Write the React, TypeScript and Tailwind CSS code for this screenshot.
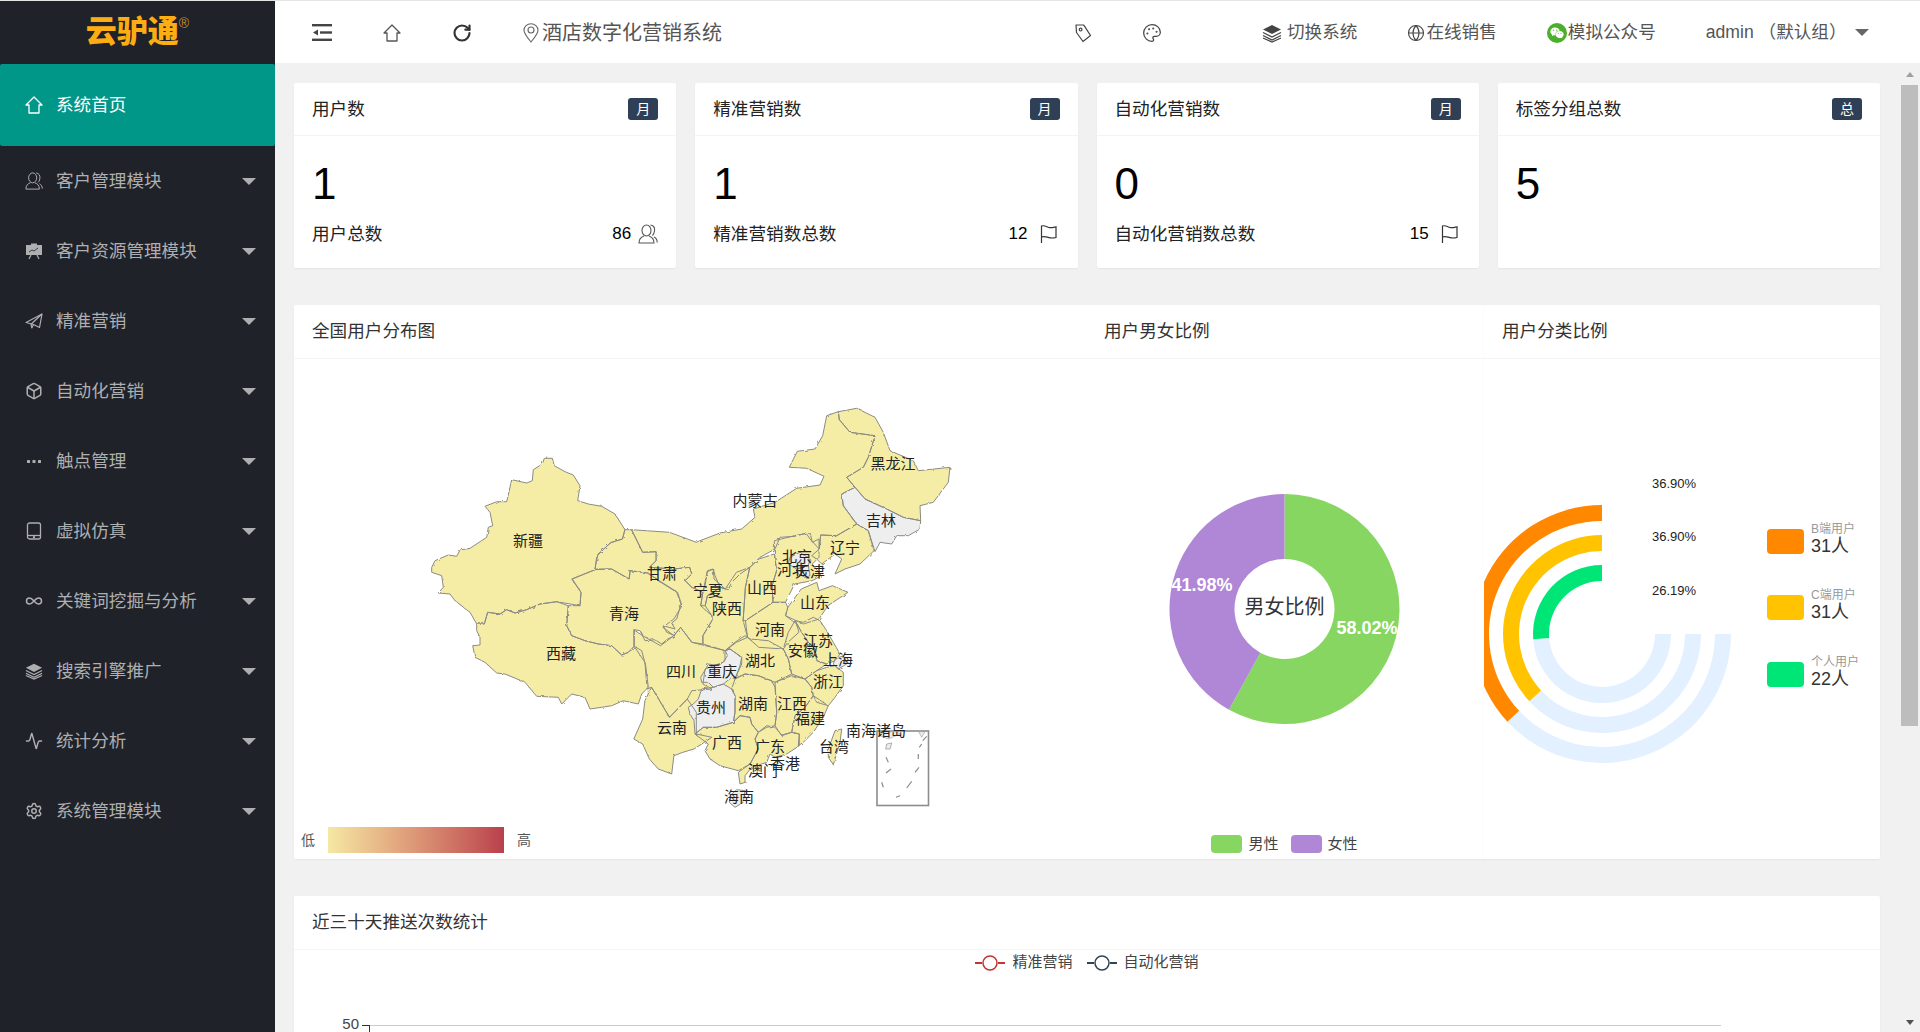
import React from "react";
import { Box, Infinity as InfinityIcon, Activity, Settings, Palette, Globe, RotateCw } from "lucide-react";
import { FaWeixin } from "react-icons/fa";

const P = (ox: number, oy: number, sx: number, sy: number, s: string) =>
  s.trim().split(/\s+/).map((p) => {
    const [x, y] = p.split(",").map(Number);
    return `${(ox + x / sx).toFixed(1)},${(oy + y / sy).toFixed(1)}`;
  }).join(" ");
const z5 = (s: string) => P(290, 380, 2.24, 3, s);
const z8 = (s: string) => P(700, 400, 3, 3, s);
const z9 = (s: string) => P(680, 600, 3, 3, s);
const z10 = (s: string) => P(425, 450, 3, 3, s);

const YEL = "#f5eda5";
const GRY = "#eeeeee";

const provinces: { pts: string; fill: string }[] = [
  { fill: YEL, pts: z10("20,355 30,335 70,318 95,322 105,303 135,298 185,265 190,235 203,230 195,190 180,172 215,158 245,158 260,92 305,102 322,95 325,62 352,45 358,28 382,28 388,50 420,68 445,78 465,110 458,155 490,165 530,172 570,195 600,242 592,270 555,282 515,322 510,362 440,390 468,430 465,470 395,458 345,465 305,482 270,492 245,482 225,495 188,490 178,525 155,525 135,490 90,455 75,435 40,432 55,415 50,380 20,370") },
  { fill: YEL, pts: z10("155,525 178,525 188,490 225,495 245,482 270,492 305,482 345,465 395,458 430,470 425,530 440,560 480,575 520,585 560,590 590,618 610,610 628,592 650,605 662,650 670,715 650,735 640,765 595,755 560,770 530,775 495,780 480,745 440,735 410,765 400,745 335,742 300,700 240,675 215,672 180,640 150,625 143,590 165,588 165,565 155,545") },
  { fill: YEL, pts: z10("430,470 465,470 468,430 442,390 510,362 560,360 612,390 615,365 670,372 700,395 755,430 768,465 755,510 740,522 750,540 715,530 725,550 750,560 728,570 710,585 690,572 660,575 645,545 628,542 628,592 610,610 590,618 560,590 520,585 480,575 440,560 425,530") },
  { fill: YEL, pts: z5("683,570 690,525 720,490 745,480 750,452 765,452 790,520 820,518 820,545 805,565 860,570 895,565 900,585 885,605 900,625 925,640 920,680 945,710 945,725 925,770 925,795 900,790 875,745 860,770 835,745 860,720 878,680 868,640 800,582 762,575 760,600 720,570") },
  { fill: YEL, pts: z5("765,452 850,460 910,490") + " " + z8("0,425 60,402 125,390 165,355 160,330 225,310 290,268 360,258 372,232 320,208 268,205 292,157 345,150 368,110 378,60 380,50 415,38 418,62 450,100 525,110 505,175 490,205 440,235 465,265 425,285 430,320 470,375 410,410 362,408 358,450 330,420 318,402 285,412 240,415 225,450 180,475 150,505 120,525 95,550 85,572 60,565 45,530 40,510 22,518 15,560") + " " + z5("925,640 900,625 885,605 900,585 895,565 860,570 805,565 820,545 820,518 790,520") },
  { fill: YEL, pts: z8("415,38 470,28 525,55 550,100 570,155 640,185 655,215 750,205 745,250 700,310 660,320 662,365 610,355 560,330 495,300 465,265 440,235 490,205 505,175 525,110 450,100 418,62") },
  { fill: GRY, pts: z8("425,285 465,265 495,300 560,330 610,355 662,365 660,390 625,410 590,410 575,435 540,430 525,458 505,395 470,375 430,320") },
  { fill: YEL, pts: z8("362,408 410,410 470,375 505,395 522,455 480,495 435,510 405,525 425,480 405,465 365,495 350,480 335,470 358,450") },
  { fill: YEL, pts: z5("1085,525 1085,485 1130,470 1165,462 1170,490 1185,480 1185,535 1170,555 1190,590 1170,605 1130,615 1110,670 1082,670 1080,620 1090,575") },
  { fill: YEL, pts: z5("1030,565 1050,540 1085,525 1090,575 1080,620 1082,670 1020,725 1015,725 1020,625") },
  { fill: YEL, pts: z5("975,630 985,610 1000,580 1030,565 1020,625 1015,725 1025,775 1000,790 975,815 925,795 925,770 945,725 945,710 930,680 935,650 965,625") },
  { fill: YEL, pts: z5("925,640 935,575 948,570 950,600 975,630 965,625 935,650 930,680 920,680") },
  { fill: YEL, pts: z5("1115,685 1145,630 1180,610 1185,635 1215,620 1250,640 1205,680 1185,720 1150,735 1110,710") },
  { fill: YEL, pts: z5("1020,725 1082,670 1110,670 1115,685 1110,710 1135,735 1140,760 1115,790 1105,810 1050,805 1025,775") },
  { fill: YEL, pts: z9("135,155 165,130 195,110 210,120 265,125 310,150 325,180 335,225 285,250 235,230 195,225 165,238 185,195 185,175 150,150") },
  { fill: YEL, pts: z9("165,240 195,225 235,230 275,245 285,265 290,340 285,380 260,385 235,400 215,375 210,355 180,350 160,370 165,340 165,290 155,270") },
  { fill: YEL, pts: z9("285,250 335,230 375,240 395,265 400,290 375,325 345,350 335,400 305,410 285,380 290,340") },
  { fill: YEL, pts: z9("410,215 440,205 465,200 490,220 490,260 465,295 445,320 410,310 400,290 395,265 375,240") },
  { fill: YEL, pts: z9("345,65 370,70 400,55 420,65 440,95 460,130 480,165 465,185 440,195 410,185 405,150 385,130 365,100") },
  { fill: YEL, pts: z9("310,150 325,100 345,65 365,100 385,130 405,150 410,185 440,195 410,215 375,240 335,225 325,180") },
  { fill: YEL, pts: z9("400,290 445,320 430,355 400,400 370,430 355,440 358,405 335,400 345,350 375,325") },
  { fill: YEL, pts: z9("235,400 260,380 285,385 305,408 335,400 358,405 358,440 320,465 285,475 270,465 260,490 215,505 195,530 195,550 180,555 175,520 210,495 235,450 225,420") },
  { fill: YEL, pts: z9("45,405 70,385 110,385 160,370 180,350 210,355 215,375 235,400 225,420 235,450 210,495 175,515 120,500 90,480 75,455 85,435") },
  { fill: YEL, pts: z5("810,925 850,1015 890,960 910,1000 910,1065 945,1075 905,1110 880,1120 860,1130 855,1185 825,1170 805,1140 790,1095 770,1080 790,1020 795,965") },
  { fill: YEL, pts: z5("770,752 790,770 830,800 860,770 875,745 900,790 975,815 980,830 970,850 930,870 925,915 945,930 900,935 890,960 850,1015 810,925 800,930 795,850 770,800") },
  { fill: GRY, pts: z9("135,155 150,150 185,175 180,200 165,240 155,235 130,255 100,265 85,250 65,250 62,235 80,205 85,195 115,200 135,185") },
  { fill: GRY, pts: z9("25,325 40,315 55,300 65,270 100,265 130,255 155,270 165,290 165,340 160,370 110,385 70,385 45,405 42,365 30,345") },
  { fill: GRY, pts: z8("270,475 300,460 330,480 325,500 290,510 265,495") },
  { fill: GRY, pts: z8("290,510 325,500 330,530 315,535 295,525") },
  { fill: GRY, pts: z9("465,180 490,170 500,195 475,210 460,195") },
  { fill: GRY, pts: z9("150,590 170,572 195,575 190,610 165,625 148,610") },
  { fill: YEL, pts: z9("445,450 465,395 485,390 480,430 460,497 445,475") },
];

const filler = z5("800,600 1030,520 1100,560 1100,720 1170,900 1100,1040 900,1030 800,950");

const labels: [string, number, number][] = [
  ["黑龙江", 893, 464], ["内蒙古", 755, 501], ["吉林", 881, 521], ["辽宁", 845, 548], ["北京", 797, 557],
  ["河北", 792, 570], ["天津", 810, 572], ["宁夏", 708, 591], ["山西", 762, 588], ["陕西", 727, 609],
  ["山东", 815, 603], ["河南", 770, 630], ["江苏", 818, 641], ["安徽", 803, 651], ["上海", 838, 660],
  ["湖北", 760, 661], ["重庆", 722, 672], ["四川", 681, 672], ["浙江", 828, 682], ["湖南", 753, 704],
  ["江西", 792, 704], ["贵州", 711, 708], ["福建", 810, 719], ["南海诸岛", 876, 731], ["台湾", 834, 747],
  ["广西", 727, 743], ["广东", 770, 747], ["香港", 785, 764], ["澳门", 763, 771], ["海南", 739, 797],
  ["云南", 672, 728], ["新疆", 528, 541], ["甘肃", 662, 574], ["青海", 624, 614], ["西藏", 561, 654],
];

const seaDashes = [
  "618,475 625,490", "618,522 633,510", "605,550 610,565", "648,595 660,590", "680,567 695,547",
  "705,520 717,505", "715,465 715,480", "718,445 725,435", "728,425 740,412",
];

const pt = (cx: number, cy: number, r: number, deg: number) => {
  const a = ((deg - 90) * Math.PI) / 180;
  return `${(cx + r * Math.cos(a)).toFixed(2)} ${(cy + r * Math.sin(a)).toFixed(2)}`;
};
const donut = (cx: number, cy: number, ri: number, ro: number, a0: number, a1: number) => {
  const l = a1 - a0 > 180 ? 1 : 0;
  return `M${pt(cx, cy, ro, a0)}A${ro} ${ro} 0 ${l} 1 ${pt(cx, cy, ro, a1)}L${pt(cx, cy, ri, a1)}A${ri} ${ri} 0 ${l} 0 ${pt(cx, cy, ri, a0)}Z`;
};

type IP = { className?: string };
const HomeIcon = ({ className }: IP) => (
  <svg viewBox="0 0 18 18" className={className} fill="none" stroke="currentColor" strokeWidth="1.3">
    <path d="M1 9 9 1l8 8h-3v8H4V9Z" strokeLinejoin="round" />
  </svg>
);
const UserIcon = ({ className }: IP) => (
  <svg viewBox="0 0 20 20" className={className} fill="none" stroke="currentColor" strokeWidth="1.1">
    <ellipse cx="8.5" cy="6.5" rx="4.5" ry="5.5" />
    <path d="M6 12C3 13 1 15 1 19h15c0-4-2-6-5-7" />
    <path d="M12.5 1c3 .5 4.5 3 4 6s-1 3.5-2 4.5M16 13c2 1 3.2 3 3.2 5.5" />
  </svg>
);
const BoardIcon = ({ className }: IP) => (
  <svg viewBox="0 0 18 18" className={className}>
    <rect x="1" y="3" width="16" height="10" fill="currentColor" />
    <rect x="6" y="1.5" width="6" height="1.5" fill="currentColor" />
    <path d="M4 17l2-4M14 17l-2-4" stroke="currentColor" strokeWidth="1.2" />
    <path d="M4 10l3-2 2 1 4-3" stroke="#1f2229" strokeWidth=".8" fill="none" />
  </svg>
);
const SendIcon = ({ className }: IP) => (
  <svg viewBox="0 0 18 18" className={className} fill="none" stroke="currentColor" strokeWidth="1.2" strokeLinejoin="round">
    <path d="M1 10.5 17 2l-2.5 13.5L8.5 12.5Z" />
    <path d="M17 2 6 12.2l.8 3.8 1.7-3.5" />
  </svg>
);
const DotsIcon = ({ className }: IP) => (
  <svg viewBox="0 0 18 18" className={className} fill="currentColor">
    <rect x="2" y="8" width="3" height="3" rx=".6" />
    <rect x="7.5" y="8" width="3" height="3" rx=".6" />
    <rect x="13" y="8" width="3" height="3" rx=".6" />
  </svg>
);
const TabletIcon = ({ className }: IP) => (
  <svg viewBox="0 0 18 18" className={className} fill="none" stroke="currentColor" strokeWidth="1.3">
    <rect x="2.5" y="1" width="13" height="16" rx="2" />
    <path d="M2.5 13.5h13" />
    <circle cx="9" cy="15.2" r=".5" fill="currentColor" />
  </svg>
);
const StackIcon = ({ className }: IP) => (
  <svg viewBox="0 0 20 20" className={className}>
    <polygon points="10,2 19,6.5 10,11 1,6.5" fill="currentColor" />
    <path d="M1 9.5l9 4.5 9-4.5M1 12.5l9 4.5 9-4.5M1 15l9 4 9-4" fill="none" stroke="currentColor" strokeWidth="1.2" />
  </svg>
);
const MenuIcon = ({ className }: IP) => (
  <svg viewBox="0 0 20 17" className={className} fill="currentColor">
    <rect x="0" y="0" width="20" height="2.4" />
    <rect x="8" y="7.3" width="12" height="2.4" />
    <rect x="0" y="14.6" width="20" height="2.4" />
    <polygon points="1,8.5 6,5.5 6,11.5" />
  </svg>
);
const TagIcon = ({ className }: IP) => (
  <svg viewBox="0 0 20 20" className={className} fill="none" stroke="currentColor" strokeWidth="1.2" strokeLinejoin="round">
    <path d="M3 2h7.5l1 1.2 6 9.3-7.5 6L3.5 9.5Z" />
    <circle cx="7.6" cy="6.6" r="1.4" />
  </svg>
);
const PinIcon = ({ className }: IP) => (
  <svg viewBox="0 0 16 20" className={className} fill="none" stroke="currentColor" strokeWidth="1.1">
    <path d="M8 19C4 14 1 10.5 1 7.2A7 6.5 0 0 1 15 7.2C15 10.5 12 14 8 19Z" />
    <circle cx="8" cy="7" r="3" />
  </svg>
);
const FlagIcon = ({ className }: IP) => (
  <svg viewBox="0 0 18 18" className={className} fill="none" stroke="currentColor" strokeWidth="1.2">
    <path d="M1.5 18V1c3-1 5 .8 7.5 1.5s4 0 7-.7V12.5c-3 .7-4.500 .8-7 .1s-5-1.600-7.500-.6" />
  </svg>
);

const navItems: { label: string; Icon: React.ComponentType<{ className?: string }> }[] = [
  { label: "客户管理模块", Icon: UserIcon },
  { label: "客户资源管理模块", Icon: BoardIcon },
  { label: "精准营销", Icon: SendIcon },
  { label: "自动化营销", Icon: Box },
  { label: "触点管理", Icon: DotsIcon },
  { label: "虚拟仿真", Icon: TabletIcon },
  { label: "关键词挖掘与分析", Icon: InfinityIcon },
  { label: "搜索引擎推广", Icon: StackIcon },
  { label: "统计分析", Icon: Activity },
  { label: "系统管理模块", Icon: Settings },
];

const Caret = ({ className }: IP) => (
  <svg viewBox="0 0 14 7" className={className} fill="currentColor">
    <polygon points="0,0 14,0 7,7" />
  </svg>
);

const cards: { title: string; badge: string; value: string; foot?: string; total?: string; user?: boolean }[] = [
  { title: "用户数", badge: "月", value: "1", foot: "用户总数", total: "86", user: true },
  { title: "精准营销数", badge: "月", value: "1", foot: "精准营销数总数", total: "12" },
  { title: "自动化营销数", badge: "月", value: "0", foot: "自动化营销数总数", total: "15" },
  { title: "标签分组总数", badge: "总", value: "5" },
];

const radial = [
  { ri: 113, ro: 129, pct: 132.84, color: "#ff8800", label: "36.90%", y: 484 },
  { ri: 83, ro: 99, pct: 132.84, color: "#ffc300", label: "36.90%", y: 537 },
  { ri: 53, ro: 69, pct: 94.28, color: "#00e676", label: "26.19%", y: 591 },
];
const radialLegend = [
  { color: "#ff8800", name: "B端用户", val: "31人", y: 530 },
  { color: "#ffc300", name: "C端用户", val: "31人", y: 596 },
  { color: "#00e676", name: "个人用户", val: "22人", y: 663 },
];

const PanelHead = ({ title }: { title: string }) => (
  <div className="h-[54px] pl-[18px] flex items-center text-[17.6px] text-[#333] border-b border-[#f4f4f4]">{title}</div>
);

export default function App() {
  return (
    <div className="h-[1032px] w-[1920px] overflow-hidden flex flex-col bg-[#f1f1f1] font-['Liberation_Sans','Noto_Sans_CJK_SC',sans-serif]">
      <div className="h-px bg-[#e4e4e4] shrink-0" />
      <div className="flex flex-1 min-h-0">
        <aside className="w-[275px] shrink-0 bg-[#1f2229] text-[#aeafb1] text-[17.6px]">
          <div className="h-[63px] flex items-start justify-center">
            <span className="mt-[11px] text-[31px] leading-[40px] font-black text-[#fdad14]">云驴通</span>
            <span className="mt-[15px] text-[14px] leading-[14px] text-[#c58f24]">®</span>
          </div>
          <div className="h-[82px] bg-[#009688] rounded-[2px] flex items-center pl-[25px] gap-[13px] text-white">
            <HomeIcon className="w-[18px] h-[18px]" />
            <span>系统首页</span>
          </div>
          {navItems.map(({ label, Icon }) => (
            <div key={label} className="h-[70px] flex items-center pl-[25px] pr-[19px] gap-[13px]">
              <Icon className="w-[18px] h-[18px] shrink-0" />
              <span className="flex-1">{label}</span>
              <Caret className="w-[14px] h-[7px]" />
            </div>
          ))}
        </aside>
        <div className="flex-1 min-w-0 flex flex-col">
          <header className="h-[62px] pt-[1px] shrink-0 bg-white flex items-center text-[#555] text-[17.6px]">
            <MenuIcon className="w-[20px] h-[17px] ml-[37px] text-[#444]" />
            <HomeIcon className="w-[20px] h-[18px] ml-[50px] text-[#555]" />
            <RotateCw className="w-[20px] h-[20px] ml-[50px] text-[#333]" strokeWidth={2.6} />
            <PinIcon className="w-[16px] h-[20px] ml-[51px] text-[#666]" />
            <span className="ml-[3px] text-[20px] text-[#555]">酒店数字化营销系统</span>
            <TagIcon className="w-[20px] h-[20px] ml-[351px] text-[#444]" />
            <Palette className="w-[20px] h-[20px] ml-[49px] text-[#444]" strokeWidth={1.5} />
            <StackIcon className="w-[20px] h-[20px] ml-[100px] text-[#444]" />
            <span className="ml-[5px]">切换系统</span>
            <Globe className="w-[18px] h-[18px] ml-[50px] text-[#444]" strokeWidth={1.5} />
            <span className="ml-[1px]">在线销售</span>
            <span className="ml-[50px] w-[20px] h-[20px] rounded-full bg-[#4caf2a] flex items-center justify-center text-white">
              <FaWeixin className="w-[14px] h-[14px]" />
            </span>
            <span className="ml-[1px]">模拟公众号</span>
            <span className="ml-[50px]">admin （默认组）</span>
            <Caret className="w-[14px] h-[7px] ml-[8px] text-[#666]" />
          </header>
          <div className="flex-1 min-h-0 flex">
            <main className="flex-1 min-w-0 pl-[19px] pr-[21px] pt-[20px] flex flex-col gap-[37px]">
              <section className="grid grid-cols-4 gap-[19px]">
                {cards.map((c) => (
                  <div key={c.title} className="h-[185px] bg-white rounded-[2px] shadow-[0_1px_2px_rgba(0,0,0,0.05)]">
                    <div className="h-[53px] px-[18px] flex items-center justify-between border-b border-[#f4f4f4] text-[17.6px] text-[#222]">
                      <span>{c.title}</span>
                      <span className="w-[30px] h-[22px] rounded-[3px] bg-[#2f4056] text-white text-[14px] flex items-center justify-center">{c.badge}</span>
                    </div>
                    <div className="px-[18px] pt-[26px]">
                      <div className="text-[44px] leading-[44px] text-black">{c.value}</div>
                      {c.foot && (
                        <div className="mt-[16px] h-[24px] flex items-center text-[17.6px] text-[#222]">
                          <span className="flex-1">{c.foot}</span>
                          {c.user ? (
                            <>
                              <span className="text-[17px] text-black mr-[7px]">{c.total}</span>
                              <UserIcon className="w-[20px] h-[20px] text-[#555]" />
                            </>
                          ) : (
                            <>
                              <span className="text-[17px] text-black mr-[12px]">{c.total}</span>
                              <FlagIcon className="w-[18px] h-[18px] mr-[2px] text-[#333]" />
                            </>
                          )}
                        </div>
                      )}
                    </div>
                  </div>
                ))}
              </section>

              <section className="flex h-[554px] shrink-0 bg-white rounded-[2px] shadow-[0_1px_2px_rgba(0,0,0,0.05)]">
                <div className="w-[792px] flex flex-col">
                  <PanelHead title="全国用户分布图" />
                  <svg viewBox="294 360 792 460" className="block w-[792px] h-[460px]">
                    <defs>
                      <filter id="rough" x="-5%" y="-5%" width="110%" height="110%">
                        <feTurbulence type="fractalNoise" baseFrequency="0.22" numOctaves="2" seed="4" />
                        <feDisplacementMap in="SourceGraphic" scale="2.5" />
                      </filter>
                    </defs>
                    <g filter="url(#rough)">
                      <polygon points={filler} fill={YEL} />
                      {provinces.map((p, i) => (
                        <polygon key={i} points={p.pts} fill={p.fill} />
                      ))}
                      {provinces.map((p, i) => (
                        <polygon key={i} points={p.pts} fill="none" stroke="#8a8a84" strokeWidth="1" strokeLinejoin="round" />
                      ))}
                    </g>
                    <rect x="877" y="732" width="51.5" height="74.5" fill="none" stroke="#8c8c8c" strokeWidth="1.6" />
                    <polygon points={z9("600,410 625,420 660,405 650,398 600,398")} fill={GRY} stroke="#999" strokeWidth=".6" />
                    <polygon points={z9("716,398 735,398 725,415")} fill={GRY} stroke="#999" strokeWidth=".6" />
                    <polygon points={z9("620,435 635,432 630,450 617,450")} fill={GRY} stroke="#999" strokeWidth=".8" />
                    {seaDashes.map((d) => (
                      <polyline key={d} points={z9(d)} fill="none" stroke="#8c8c8c" strokeWidth="1.2" />
                    ))}
                    {labels.map(([t, x, y]) => (
                      <text key={t} x={x} y={y} fontSize="15" fill="#222" textAnchor="middle" dominantBaseline="central">{t}</text>
                    ))}
                  </svg>
                  <div className="flex items-center pl-[7px] mt-[8px] text-[14px] text-[#555]">
                    <span className="w-[15px]">低</span>
                    <div className="ml-[12px] w-[176px] h-[26px] bg-gradient-to-r from-[#f5e8a3] to-[#b93f4c]" />
                    <span className="ml-[13px]">高</span>
                  </div>
                </div>
                <div className="w-[397px] flex flex-col">
                  <PanelHead title="用户男女比例" />
                  <svg viewBox="1086 360 397 460" className="block w-[397px] h-[460px]">
                    <path d={donut(1284.5, 610, 50, 115, 0, 208.87)} fill="#88d662" />
                    <path d={donut(1284.5, 610, 50, 115, 208.87, 359.99)} fill="#b087d6" />
                    <text x="1284.5" y="608" fontSize="20" fill="#333" textAnchor="middle" dominantBaseline="central">男女比例</text>
                    <text x="1202" y="586" fontSize="18" fontWeight="700" fill="#fff" textAnchor="middle" dominantBaseline="central">41.98%</text>
                    <text x="1367" y="629" fontSize="18" fontWeight="700" fill="#fff" textAnchor="middle" dominantBaseline="central">58.02%</text>
                  </svg>
                  <div className="flex justify-center items-center mt-[14px] text-[15px] text-[#444]">
                    <span className="w-[31px] h-[18px] rounded-[4px] bg-[#88d662]" />
                    <span className="ml-[6px] mr-[12px]">男性</span>
                    <span className="w-[31px] h-[18px] rounded-[4px] bg-[#b087d6]" />
                    <span className="ml-[6px]">女性</span>
                  </div>
                </div>
                <div className="w-[397px] flex flex-col border-l border-[#fbfbfb]">
                  <PanelHead title="用户分类比例" />
                  <svg viewBox="1484 360 396 499" className="block w-[396px] h-[499px]">
                    {radial.map((r) => (
                      <g key={r.ri}>
                        <path d={donut(1602, 635, r.ri, r.ro, -270, -r.pct)} fill="#e3f0ff" />
                        <path d={donut(1602, 635, r.ri, r.ro, -r.pct, 0)} fill={r.color} />
                        <text x="1674" y={r.y} fontSize="13" fill="#222" textAnchor="middle" dominantBaseline="central">{r.label}</text>
                      </g>
                    ))}
                    {radialLegend.map((l) => (
                      <g key={l.name}>
                        <rect x="1767" y={l.y} width="37" height="25" rx="4" fill={l.color} />
                        <text x="1811" y={l.y} fontSize="12" fill="#999" dominantBaseline="central">{l.name}</text>
                        <text x="1811" y={l.y + 17} fontSize="18" fill="#333" dominantBaseline="central">{l.val}</text>
                      </g>
                    ))}
                  </svg>
                </div>
              </section>

              <section className="h-[300px] shrink-0 bg-white rounded-[2px] shadow-[0_1px_2px_rgba(0,0,0,0.05)]">
                <div className="h-[54px] pl-[18px] flex items-center text-[17.6px] text-[#333] border-b border-[#f4f4f4]">近三十天推送次数统计</div>
                <div className="h-[25px] flex items-center justify-center text-[15px] text-[#444]">
                  <svg viewBox="0 0 30 16" className="w-[30px] h-[16px] text-[#c23531]" fill="none" stroke="currentColor" strokeWidth="1.5">
                    <path d="M0 8h7M23 8h7" strokeWidth="2" />
                    <circle cx="15" cy="8" r="7" fill="#fff" />
                  </svg>
                  <span className="ml-[7px] mr-[14px]">精准营销</span>
                  <svg viewBox="0 0 30 16" className="w-[30px] h-[16px] text-[#2f4554]" fill="none" stroke="currentColor" strokeWidth="1.5">
                    <path d="M0 8h7M23 8h7" strokeWidth="2" />
                    <circle cx="15" cy="8" r="7" fill="#fff" />
                  </svg>
                  <span className="ml-[7px]">自动化营销</span>
                </div>
                <svg viewBox="294 975 1586 100" className="block w-full h-[100px]">
                  <text x="359" y="1023" fontSize="15" fill="#444" textAnchor="end" dominantBaseline="central">50</text>
                  <path d="M369 1025.5H1721" stroke="#ccc" strokeWidth="1" />
                  <path d="M362 1025.500H369M369.500 1025V1075" stroke="#333" strokeWidth="1" />
                </svg>
              </section>
            </main>
            <div className="w-[17px] mr-[2px] shrink-0 flex flex-col items-center">
              <div className="h-[22px] flex items-center justify-center">
                <div className="w-0 h-0 border-x-[4.5px] border-x-transparent border-b-[5px] border-b-[#a0a0a0]" />
              </div>
              <div className="w-[17px] h-[641px] bg-[#bdbdbd]" />
              <div className="flex-1" />
              <div className="h-[20px] flex items-center justify-center">
                <div className="w-0 h-0 border-x-[4.5px] border-x-transparent border-t-[5px] border-t-[#505050]" />
              </div>
            </div>
          </div>
        </div>
      </div>
    </div>
  );
}
